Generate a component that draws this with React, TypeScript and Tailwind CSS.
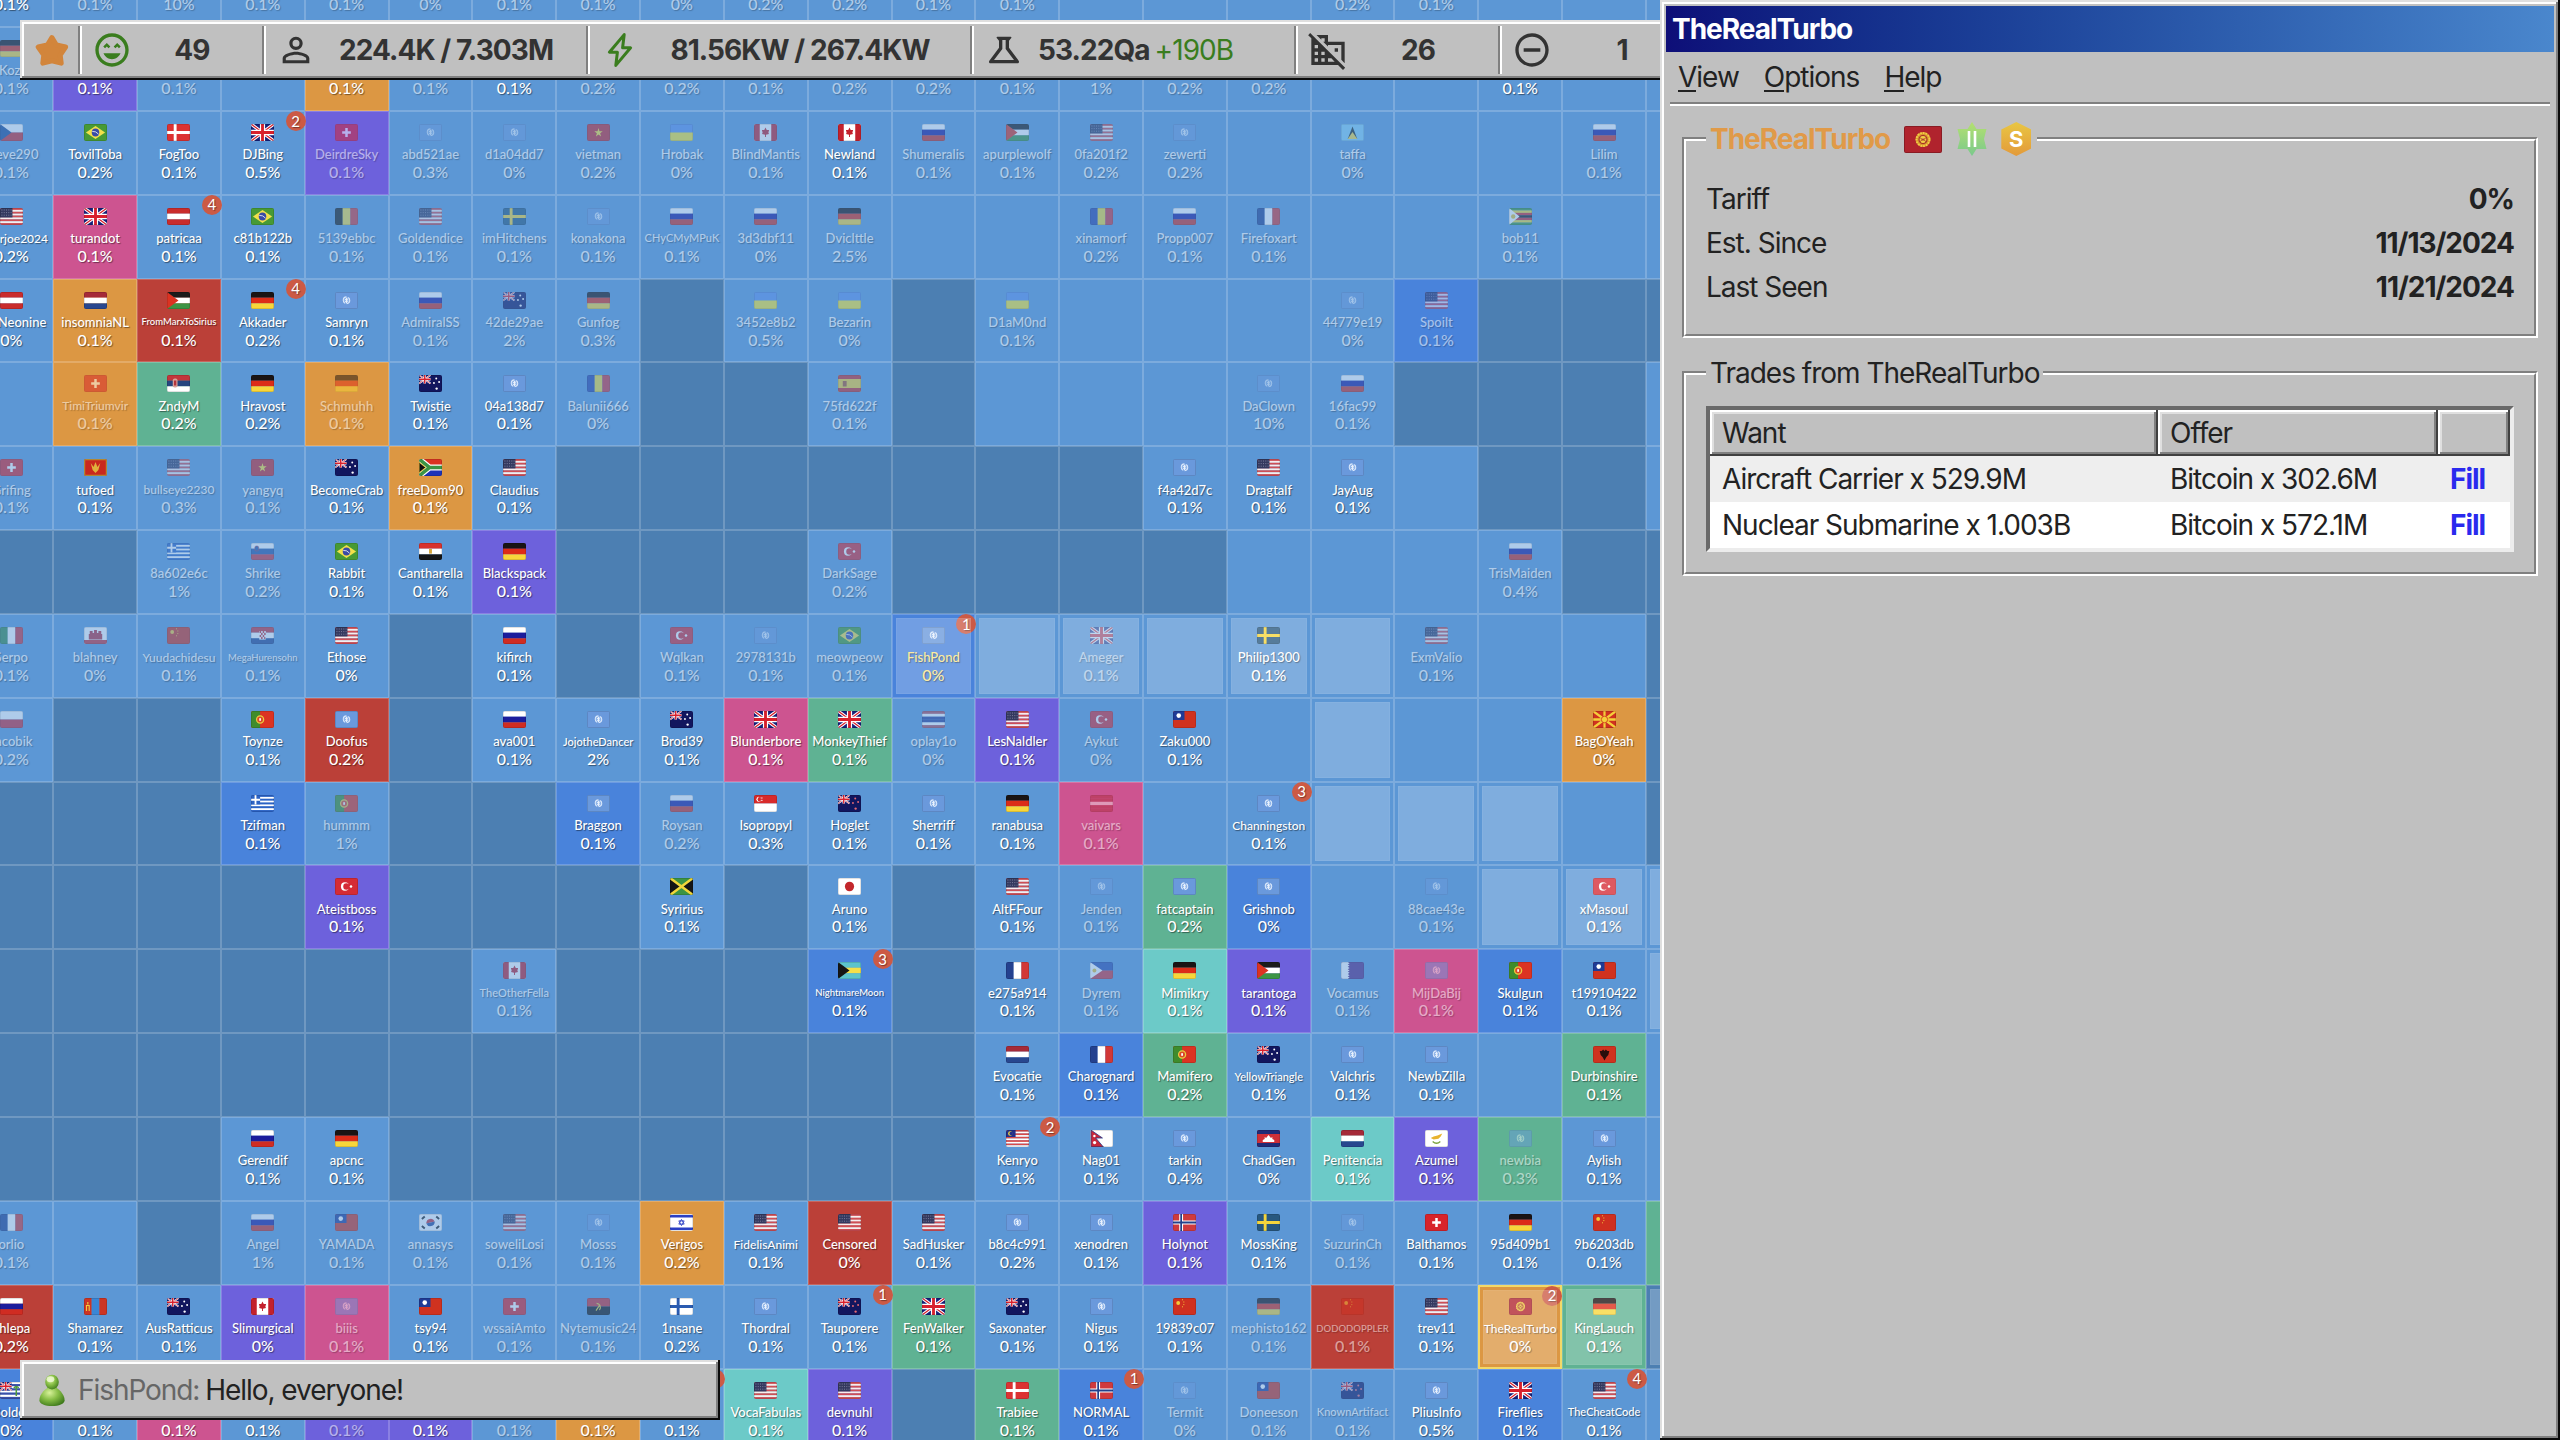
import type { ReactNode } from "react";
import {
  MdOutlineSentimentVerySatisfied,
  MdPersonOutline,
  MdOutlineScience,
  MdDomainDisabled,
  MdRemoveCircleOutline,
} from "react-icons/md";

/* ---------- flags (24 x 17 units) ---------- */

const hs = (...c: string[]) =>
  c.map((f, i) => <rect key={i} x="0" y={(17 / c.length) * i} width="24" height={17 / c.length + 0.1} fill={f} />);
const vs = (...c: string[]) =>
  c.map((f, i) => <rect key={i} y="0" x={(24 / c.length) * i} height="17" width={24 / c.length + 0.1} fill={f} />);
const bg = (f: string) => <rect width="24" height="17" fill={f} />;
const nordic = (base: string, outer: string, inner?: string) => (
  <>
    {bg(base)}
    <path d="M0 8.5H24M8.5 0V17" stroke={outer} strokeWidth={inner ? 4 : 3} />
    {inner && <path d="M0 8.5H24M8.5 0V17" stroke={inner} strokeWidth="1.8" />}
  </>
);
const jack = (
  <>
    {bg("#15207a")}
    <path d="M0 0L24 17M24 0L0 17" stroke="#fff" strokeWidth="3.4" />
    <path d="M0 0L24 17M24 0L0 17" stroke="#d8202c" strokeWidth="1.3" />
    <path d="M12 0V17M0 8.5H24" stroke="#fff" strokeWidth="5.4" />
    <path d="M12 0V17M0 8.5H24" stroke="#d8202c" strokeWidth="3" />
  </>
);
const stripes = (n: number, a: string, b: string) => hs(...Array.from({ length: n }, (_, i) => (i % 2 ? b : a)));
const crescent = (x: number, y: number, r: number, c: string, back: string) => (
  <>
    <circle cx={x} cy={y} r={r} fill={c} />
    <circle cx={x + r * 0.35} cy={y} r={r * 0.78} fill={back} />
    <circle cx={x + r * 1.5} cy={y} r={r * 0.32} fill={c} />
  </>
);
const southern = (star: string) => (
  <>
    {bg("#12165e")}
    <g transform="scale(.5)">{jack}</g>
    <g fill={star}>
      <circle cx="18" cy="3.6" r="1" />
      <circle cx="21" cy="7" r="1" />
      <circle cx="15.6" cy="8" r="1" />
      <circle cx="18.4" cy="13.6" r="1.2" />
    </g>
  </>
);

const FLAGS: Record<string, ReactNode> = {
  un: (
    <>
      {bg("#6a99dc")}
      <circle cx="12" cy="8.3" r="3.4" fill="#8fb4e8" stroke="#dbe9fb" strokeWidth="1.1" strokeDasharray="8.6 2" strokeDashoffset="-7" />
      <path d="M10.5 7.2L13.6 9.6M13.4 6.6L10.8 10M12 6V11" stroke="#eaf2fd" strokeWidth="1" />
    </>
  ),
  br: (
    <>
      {bg("#479a35")}
      <path d="M12 2L22 8.5L12 15L2 8.5Z" fill="#f2e04a" />
      <circle cx="12" cy="8.5" r="3.9" fill="#3a4ba5" />
      <path d="M8.6 7.4Q12.5 7 15.2 10.2" stroke="#fff" strokeWidth="0.8" fill="none" />
    </>
  ),
  dk: nordic("#dc3232", "#fff"),
  se: nordic("#27587f", "#f5d53c"),
  fi: nordic("#fff", "#2a5bb0"),
  no: nordic("#cf3a3e", "#fff", "#24418c"),
  gb: jack,
  ch: (
    <>
      {bg("#d8232a")}
      <path d="M12 4V13M7.5 8.5H16.5" stroke="#fff" strokeWidth="2.6" />
    </>
  ),
  vn: (
    <>
      {bg("#c8262c")}
      <path d="M12 4L13 7.3H16.4L13.7 9.3L14.7 12.6L12 10.6L9.3 12.6L10.3 9.3L7.6 7.3H11Z" fill="#fbe53a" />
    </>
  ),
  ua: hs("#5f93ec", "#f6e838"),
  ca: (
    <>
      {bg("#fff")}
      <path d="M0 0H6V17H0ZM18 0H24V17H18Z" fill="#c3212d" />
      <path d="M12 3.6L13.3 6L15.8 6L15 8.6L15.6 10L12.5 10.7V13H11.5V10.7L8.4 10L9 8.6L8.2 6L10.7 6Z" fill="#c3212d" />
    </>
  ),
  ru: hs("#fff", "#1b1c9c", "#d02c22"),
  ps: (
    <>
      {hs("#1b1b1b", "#fff", "#3c9444")}
      <path d="M0 0L12 8.5L0 17Z" fill="#dc3322" />
    </>
  ),
  us: (
    <>
      {stripes(9, "#cf4f55", "#f5eeee")}
      <rect width="13" height="9.4" fill="#34395f" />
      <path d="M1.5 2H12M1.5 4.6H12M1.5 7.2H12" stroke="#9da0ba" strokeWidth="0.7" strokeDasharray="1 1.4" />
    </>
  ),
  lc: (
    <>
      {bg("#86cff5")}
      <path d="M12 2.5L17 15H7Z" fill="#1d2a2a" />
      <path d="M12 8L17 15H7Z" fill="#f2d94a" />
    </>
  ),
  cz: (
    <>
      {hs("#fff", "#cc2a30")}
      <path d="M0 0L12 8.5L0 17Z" fill="#1d4a94" />
    </>
  ),
  at: hs("#c92c2c", "#fff", "#c92c2c"),
  lv: hs("#b03040", "#b03040", "#f0dde0", "#b03040", "#b03040"),
  th: hs("#b54c5a", "#fff", "#2b3f96", "#2b3f96", "#fff", "#b54c5a"),
  be: vs("#1c1c1c", "#f0dc4b", "#cf3a3e"),
  ro: vs("#2a45a8", "#eddb3e", "#cc3540"),
  fr: vs("#24418f", "#fff", "#d23838"),
  it: vs("#3a8a52", "#fff", "#cc3540"),
  de: hs("#1a1414", "#dc2c18", "#f8d63a"),
  nl: hs("#a52a38", "#fff", "#28478f"),
  pl: hs("#fff", "#c92c3c"),
  sg: (
    <>
      {hs("#d82a2a", "#fff")}
      <circle cx="5" cy="4.3" r="2.5" fill="#fff" />
      <circle cx="6" cy="4.3" r="2.2" fill="#d82a2a" />
      <path d="M7 3H9M7 5.4H9" stroke="#fff" strokeWidth="0.8" />
    </>
  ),
  zw: (
    <>
      {hs("#3c9444", "#f2dc3a", "#cc2a30", "#1b1b1b", "#cc2a30", "#f2dc3a", "#3c9444")}
      <path d="M0 0L11 8.5L0 17Z" fill="#fff" />
      <circle cx="4.4" cy="8.5" r="2.3" fill="#e6c23a" />
    </>
  ),
  au: southern("#fff"),
  nz: southern("#e86a74"),
  es: (
    <>
      {bg("#f4cf35")}
      <path d="M0 2H24M0 15H24" stroke="#c92c2c" strokeWidth="4" />
      <rect x="5" y="6" width="4" height="5.5" fill="#a8562c" />
    </>
  ),
  rs: (
    <>
      {hs("#c2363c", "#26457f", "#fff")}
      <rect x="6" y="3.5" width="5" height="9" rx="2" fill="#d9a19a" />
      <rect x="7.3" y="5.5" width="2.4" height="5" fill="#b3343c" />
    </>
  ),
  me: (
    <>
      {bg("#c9281e")}
      <rect x="0.6" y="0.6" width="22.8" height="15.8" fill="none" stroke="#c99a3a" strokeWidth="1.2" />
      <path d="M7 4L9 11L12 14L15 11L17 4L14 8L12 3L10 8Z" fill="#e0b13c" />
    </>
  ),
  za: (
    <>
      {hs("#dc3322", "#1c33b8")}
      <path d="M0 0L11 8.5L0 17M11 8.5H24" stroke="#fff" strokeWidth="6" fill="none" />
      <path d="M0 0L11 8.5L0 17M10 8.5H24" stroke="#3c9444" strokeWidth="3.6" fill="none" />
      <path d="M0 3L7 8.5L0 14Z" fill="#111" stroke="#f2c83a" strokeWidth="1" />
    </>
  ),
  gr: (
    <>
      {stripes(9, "#2b62c4", "#fff")}
      <rect width="9.5" height="9.4" fill="#2b62c4" />
      <path d="M4.7 0V9.4M0 4.7H9.5" stroke="#fff" strokeWidth="1.9" />
    </>
  ),
  si: (
    <>
      {hs("#fff", "#2a57a5", "#cc3540")}
      <rect x="4" y="3" width="4" height="5" rx="1.5" fill="#2a57a5" stroke="#cc3540" strokeWidth="0.5" />
    </>
  ),
  eg: (
    <>
      {hs("#d8322c", "#fff", "#151515")}
      <rect x="10.5" y="6" width="3" height="4.6" fill="#d6a53a" />
    </>
  ),
  gi: (
    <>
      {bg("#fff")}
      <rect y="13" width="24" height="4" fill="#c8303a" />
      <path d="M5 12.5V7H6V4H9V6H10.5V3H13.5V6H15V4H18V7H19V12.5Z" fill="#b83040" />
    </>
  ),
  cn: (
    <>
      {bg("#cf3020")}
      <circle cx="5.4" cy="5" r="2" fill="#f4c93a" />
      <path d="M9.4 1.8h1M10.8 4h1M10.8 6.6h1M9.4 8.8h1" stroke="#f4c93a" strokeWidth="1" />
    </>
  ),
  hr: (
    <>
      {hs("#c9333c", "#fff", "#28478f")}
      <rect x="8.6" y="4" width="6.8" height="8.6" fill="#fff" />
      <path d="M9 5H15M10.5 7H16M9 9H15M10.5 11H15" stroke="#c9333c" strokeWidth="1.8" strokeDasharray="1.6 1.6" />
    </>
  ),
  tr: (
    <>
      {bg("#d52b35")}
      {crescent(10.4, 8.5, 4.2, "#fff", "#d52b35")}
    </>
  ),
  tw: (
    <>
      {bg("#d0321f")}
      <rect width="12" height="9" fill="#1f3b96" />
      <circle cx="6" cy="4.6" r="2.4" fill="#fff" />
    </>
  ),
  pt: (
    <>
      {bg("#dc3322")}
      <rect width="9.5" height="17" fill="#3f8c2c" />
      <circle cx="9.5" cy="8.5" r="3.7" fill="#dc4a2a" stroke="#e8cf3f" strokeWidth="1.3" />
      <rect x="8.6" y="7.2" width="1.8" height="2.6" fill="#fff" />
    </>
  ),
  mk: (
    <>
      {bg("#d0321f")}
      <path d="M0 0L24 17M24 0L0 17M12 0V17M0 8.5H24" stroke="#f4cf3a" strokeWidth="2.3" />
      <circle cx="12" cy="8.5" r="3.3" fill="#f4cf3a" stroke="#d0321f" strokeWidth="0.8" />
    </>
  ),
  jm: (
    <>
      {bg("#3c9444")}
      <path d="M0 0L12 8.5L0 17ZM24 0L12 8.5L24 17Z" fill="#151515" />
      <path d="M0 0L24 17M24 0L0 17" stroke="#f2d63a" strokeWidth="2.6" />
    </>
  ),
  jp: (
    <>
      {bg("#fff")}
      <circle cx="12" cy="8.5" r="4.8" fill="#c3272b" />
    </>
  ),
  bs: (
    <>
      {hs("#5cc4cc", "#f4df4a", "#5cc4cc")}
      <path d="M0 0L12 8.5L0 17Z" fill="#151515" />
    </>
  ),
  ph: (
    <>
      {hs("#2d4fae", "#cc3540")}
      <path d="M0 0L13 8.5L0 17Z" fill="#fff" />
      <circle cx="4.6" cy="8.5" r="2" fill="#e6c23a" />
    </>
  ),
  qa: (
    <>
      {bg("#5a2c84")}
      <path d="M0 0H7L9 1.2L7 2.4L9 3.6L7 4.8L9 6L7 7.2L9 8.4L7 9.6L9 10.8L7 12L9 13.2L7 14.4L9 15.6L7 17H0Z" fill="#fff" />
    </>
  ),
  al: (
    <>
      {bg("#d0321f")}
      <path d="M7 5L9 5L10.6 3.4L12 5L13.4 3.4L15 5L17 5L16 9L14 11L12 14.6L10 11L8 9Z" fill="#2a0e0c" />
    </>
  ),
  my: (
    <>
      {stripes(10, "#d84a4a", "#fff")}
      <rect width="10" height="7" fill="#24308a" />
      <circle cx="4.4" cy="3.5" r="2.2" fill="#f0d23a" />
      <circle cx="5.3" cy="3.5" r="1.7" fill="#24308a" />
    </>
  ),
  np: (
    <>
      {bg("#fff")}
      <path d="M1 0L13 8H6L14 17H1Z" fill="#c9283a" stroke="#1f3b8c" strokeWidth="0.8" />
      <circle cx="4.6" cy="6" r="1.3" fill="#fff" />
      <circle cx="4.8" cy="12.6" r="1.7" fill="#fff" />
    </>
  ),
  kh: (
    <>
      {bg("#cf2f38")}
      <path d="M0 2H24M0 15H24" stroke="#1f2b78" strokeWidth="4" />
      <path d="M6 12V10L8 9V7L9.5 8L12 5L14.5 8L16 7V9L18 10V12Z" fill="#fff" />
    </>
  ),
  cy: (
    <>
      {bg("#fff")}
      <path d="M6 8L9 6.4L13 5.6L18 3.4L16.4 6.4L14 8.8L9 9.4Z" fill="#e8b32e" />
      <path d="M8 11.4Q12 15 16 11.4" stroke="#7aa23c" strokeWidth="1.4" fill="none" />
    </>
  ),
  il: (
    <>
      {bg("#fff")}
      <path d="M0 2.2H24M0 14.8H24" stroke="#2b3fc4" strokeWidth="2.4" />
      <path d="M12 5.4L14.8 10.1H9.2ZM12 11.6L9.2 6.9H14.8Z" fill="none" stroke="#2b3fc4" strokeWidth="0.9" />
    </>
  ),
  kr: (
    <>
      {bg("#fff")}
      <path d="M7.6 9.5A4.6 4.6 0 0 1 16.4 7.5Z" fill="#c8303a" />
      <path d="M7.6 9.5A4.6 4.6 0 0 0 16.4 7.5Z" fill="#2a4a96" />
      <path d="M3 5L6 2.4M18 2.4L21 5M3 12L6 14.6M18 14.6L21 12" stroke="#222" strokeWidth="2" />
    </>
  ),
  mn: (
    <>
      {vs("#cc3524", "#3a86d6", "#cc3524")}
      <path d="M2.6 13V7.5H5.4V13M4 6.6V4" stroke="#f0cf3a" strokeWidth="1.2" fill="none" />
    </>
  ),
  ao: (
    <>
      {hs("#cc2f34", "#151515")}
      <path d="M9.4 12.6L13.6 6.6M10 5.4A4 4 0 0 1 13 12" stroke="#e0cf3a" strokeWidth="1.2" fill="none" />
    </>
  ),
  kg: (
    <>
      {bg("#b0232d")}
      <circle cx="12" cy="8.5" r="4.7" fill="#d8932f" />
      <circle cx="12" cy="8.5" r="4.1" fill="none" stroke="#f0cf45" strokeWidth="1.2" strokeDasharray="1.1 0.6" />
      <circle cx="12" cy="8.5" r="2.5" fill="#f0cf45" stroke="#a12a28" strokeWidth="0.7" />
      <path d="M10.2 7.4Q12 9.4 13.8 7.4M10.2 9.8Q12 7.6 13.8 9.8" stroke="#a12a28" strokeWidth="0.6" fill="none" />
    </>
  ),
  io: (
    <>
      {stripes(8, "#fff", "#3a4fa8")}
      <g transform="scale(.5)">{jack}</g>
      <path d="M17 5V14M14.5 6Q17 3 19.5 6" stroke="#4f9a3c" strokeWidth="1.6" fill="none" />
    </>
  ),
};

function Flag({ code, className }: { code: string; className: string }) {
  return (
    <svg viewBox="0 0 24 17" preserveAspectRatio="none" className={`overflow-hidden rounded-[2px] ${className}`}>
      {FLAGS[code]}
      <rect x="0.3" y="0.3" width="23.4" height="16.4" rx="1" fill="none" stroke="#000" strokeOpacity=".22" strokeWidth=".7" />
    </svg>
  );
}

/* ---------- world map ---------- */

/*
 * One string per tile, "terrain flag name tariff [options]".
 * Options: i = inactive, h = in reach, s = selected, y = own tile, 1-9 = trade count.
 * A terrain alone is an unclaimed tile; "-" stands for a flag and name that are out of view.
 */
const WORLD: string[] = [
  "L - - 0.1%,L - - 0.1% i,L - - 10% i,L - - 0.1% i,L - - 0.1% i,L - - 0% i,L - - 0.1% i,L - - 0.1% i,L - - 0% i,L - - 0.2% i,L - - 0.2% i,L - - 0.1% i,L - - 0.1% i,L,L,L,L - - 0.2% i,L - - 0.1% i,L,L,L",
  "L de Kozi 0.1% i,P - - 0.1%,L - - 0.1% i,L,O - - 0.1%,L - - 0.1% i,L - - 0.1%,L - - 0.2% i,L - - 0.2% i,L - - 0.1% i,L - - 0.2% i,L - - 0.2% i,L - - 0.1% i,L - - 1% i,L - - 0.2% i,L - - 0.2% i,L,L,L - - 0.1%,L,L",
  "L cz Steve290 0.1% i,L br TovilToba 0.2%,L dk FogToo 0.1%,L gb DJBing 0.5% 2,P ch DeirdreSky 0.1% i,L un abd521ae 0.3% i,L un d1a04dd7 0% i,L vn vietman 0.2% i,L ua Hrobak 0% i,L ca BlindMantis 0.1% i,L ca Newland 0.1%,L ru Shumeralis 0.1% i,L ps apurplewolf 0.1% i,L us 0fa201f2 0.2% i,L un zewerti 0.2% i,L,L lc taffa 0% i,L,L,L ru Lilim 0.1% i,L",
  "L us superjoe2024 0.2%,K gb turandot 0.1%,L at patricaa 0.1% 4,L br c81b122b 0.1%,L be 5139ebbc 0.1% i,L us Goldendice 0.1% i,L se imHitchens 0.1% i,L un konakona 0.1% i,L ru CHyCMyMPuK 0.1% i,L ru 3d3dbf11 0% i,L de Dviclttle 2.5% i,L,L,L ro xinamorf 0.2% i,L ru Propp007 0.1% i,L fr Firefoxart 0.1% i,L,L,L zw bob11 0.1% i,L,L",
  "L at TheNeonine 0%,O nl insomniaNL 0.1%,R ps FromMarxToSirius 0.1%,L de Akkader 0.2% 4,L un Samryn 0.1%,L ru AdmiralSS 0.1% i,L au 42de29ae 2% i,L de Gunfog 0.3% i,D,L ua 3452e8b2 0.5% i,L ua Bezarin 0% i,D,L ua D1aM0nd 0.1% i,L,L,L,L un 44779e19 0% i,B us Spoilt 0.1% i,D,D,D",
  "L,O ch TimiTriumvir 0.1% i,G rs ZndyM 0.2%,L de Hravost 0.2%,O de Schmuhh 0.1% i,L au Twistie 0.1%,L un 04a138d7 0.1%,L ro Balunii666 0% i,D,D,L es 75fd622f 0.1% i,D,L,L,L,L un DaClown 10% i,L ru 16fac99 0.1% i,D,D,D,L",
  "L ch Grifing 0.1% i,L me tufoed 0.1%,L us bullseye2230 0.3% i,L vn yangyq 0.1% i,L au BecomeCrab 0.1%,O za freeDom90 0.1%,L us Claudius 0.1%,D,D,D,D,D,D,D,L un f4a42d7c 0.1%,L us Dragtalf 0.1%,L un JayAug 0.1%,L,D,D,L",
  "D,D,L gr 8a602e6c 1% i,L si Shrike 0.2% i,L br Rabbit 0.1%,L eg Cantharella 0.1%,P de Blackspack 0.1%,D,D,D,L tr DarkSage 0.2% i,D,D,D,D,L,L,L,L ru TrisMaiden 0.4% i,D,D",
  "L it Serpo 0.1% i,L gi blahney 0% i,L cn Yuudachidesu 0.1% i,L hr MegaHurensohn 0.1% i,L us Ethose 0%,D,L ru kifirch 0.1%,D,L tr Wqlkan 0.1% i,L un 2978131b 0.1% i,L br meowpeow 0.1% i,B un FishPond 0% hy1,H,L gb Ameger 0.1% hi,H,L se Philip1300 0.1% h,H,L us ExmValio 0.1% i,L,L,D",
  "L pl Jacobik 0.2% i,D,D,L pt Toynze 0.1%,R un Doofus 0.2%,D,L ru ava001 0.1%,L un JojotheDancer 2%,L au Brod39 0.1%,K gb Blunderbore 0.1%,G gb MonkeyThief 0.1%,L th oplay1o 0% i,P us LesNaldler 0.1%,L tr Aykut 0% i,L tw Zaku000 0.1%,L,H,L,L,O mk BagOYeah 0%,D",
  "D,D,D,B gr Tzifman 0.1%,L pt hummm 1% i,D,D,B un Braggon 0.1%,L ru Roysan 0.2% i,L sg Isopropyl 0.3%,L nz Hoglet 0.1%,L un Sherriff 0.1%,L de ranabusa 0.1%,K lv vaivars 0.1% i,L,L un Channingston 0.1% 3,H,H,H,L,D",
  "D,D,D,D,P tr Ateistboss 0.1%,D,D,D,L jm Syririus 0.1%,D,L jp Aruno 0.1%,D,L us AltFFour 0.1%,L un Jenden 0.1% i,G un fatcaptain 0.2%,B un Grishnob 0%,L,L un 88cae43e 0.1% i,H,L tr xMasoul 0.1% h,H",
  "D,D,D,D,D,D,L ca TheOtherFella 0.1% i,D,D,D,B bs NightmareMoon 0.1% 3,D,L fr e275a914 0.1%,L ph Dyrem 0.1% i,T de Mimikry 0.1%,P ps tarantoga 0.1%,L qa Vocamus 0.1% i,K un MijDaBij 0.1% i,B pt Skulgun 0.1%,L tw t19910422 0.1%,H",
  "D,D,D,D,D,D,D,D,D,D,D,D,L nl Evocatie 0.1%,B fr Charognard 0.1%,G pt Mamifero 0.2%,L au YellowTriangle 0.1%,L un Valchris 0.1%,L un NewbZilla 0.1%,L,G al Durbinshire 0.1%,L",
  "D,D,D,L ru Gerendif 0.1%,L de apcnc 0.1%,D,D,D,D,D,D,D,L my Kenryo 0.1% 2,L np Nag01 0.1%,L un tarkin 0.4%,L kh ChadGen 0%,T nl Penitencia 0.1%,P cy Azumel 0.1%,G un newbia 0.3% i,L un Aylish 0.1%,L",
  "L fr orlio 0.1% i,L,D,L ru Angel 1% i,L tw YAMADA 0.1% i,L kr annasys 0.1% i,L us soweliLosi 0.1% i,L un Mosss 0.1% i,O il Verigos 0.2%,L us FidelisAnimi 0.1%,R us Censored 0%,L us SadHusker 0.1%,L un b8c4c991 0.2%,L un xenodren 0.1%,P no Holynot 0.1%,L se MossKing 0.1%,L un SuzurinCh 0.1% i,L ch Balthamos 0.1%,L de 95d409b1 0.1%,L cn 9b6203db 0.1%,G",
  "R ru Shlepa 0.2%,L mn Shamarez 0.1%,L au AusRatticus 0.1%,P ca Slimurgical 0%,K un biiis 0.1% i,L tw tsy94 0.1%,L ch wssaiAmto 0.1% i,L ao Nytemusic24 0.1% i,L fi 1nsane 0.2%,L un Thordral 0.1%,L nz Tauporere 0.1% 1,G gb FenWalker 0.1%,L au Saxonater 0.1%,L un Nigus 0.1%,L cn 19839c07 0.1%,L de mephisto162 0.1% i,R cn DODODOPPLER 0.1% i,L us trev11 0.1%,O kg TheRealTurbo 0% hs2,G de KingLauch 0.1% h,E",
  "B io Boldor 0%,L - - 0.1%,K - - 0.1%,L - - 0.1%,P - - 0.1% i,P - - 0.1%,L - - 0.1% i,O - - 0.1%,L - - 0.1% 1,T us VocaFabulas 0.1%,P us devnuhl 0.1%,D,G dk Trabiee 0.1%,B no NORMAL 0.1% 1,L un Termit 0% i,L tw Doneeson 0.1% i,L nz KnownArtifact 0.1% i,L un PliusInfo 0.5%,B gb Fireflies 0.1%,L us TheCheatCode 0.1% 4,L",
];

const TERRAIN: Record<string, string> = {
  L: "bg-[#5c97d5]",
  H: "bg-[#5c97d5]",
  D: "bg-[#4c7fb2]",
  E: "bg-[#4c7fb2]",
  B: "bg-[#4983db]",
  P: "bg-[#6d61dc]",
  O: "bg-[#dc9743]",
  K: "bg-[#cd5490]",
  R: "bg-[#bb4038]",
  G: "bg-[#5fb293]",
  T: "bg-[#6ccac8]",
};

const SMALLEST = ["FromMarxToSirius", "MegaHurensohn", "NightmareMoon", "DODODOPPLER"];
const SMALL = ["CHyCMyMPuK", "TheOtherFella", "JojotheDancer", "YellowTriangle", "TheCheatCode", "KnownArtifact"];

function nameSize(name: string) {
  if (SMALLEST.includes(name)) return "text-[9.5px]";
  if (SMALL.includes(name)) return "text-[11px]";
  if (name.length > 11) return "text-[12px]";
  return "text-[13px]";
}

function Tile({ spec }: { spec: string }) {
  const [terrain, flag, name, tariff, opts = ""] = spec.split(" ");
  const inactive = opts.includes("i");
  const reach = terrain === "H" || terrain === "E" || opts.includes("h");
  const count = opts.replace(/\D/g, "");
  return (
    <div
      className={`relative flex flex-col items-center border ${TERRAIN[terrain]} ${
        opts.includes("s") ? "z-10 border-2 border-[#f3d968] pt-[11px]" : "border-white/20 pt-[12px]"
      }`}
    >
      {flag && (
        <div
          className={`flex flex-col items-center whitespace-nowrap [text-shadow:1px_1px_1px_rgba(0,0,0,0.45)] ${
            inactive ? "opacity-50" : ""
          } ${opts.includes("y") ? "text-[#fbe78a]" : "text-white"}`}
        >
          {flag === "-" ? (
            <span className="h-[40px]" />
          ) : (
            <>
              <Flag code={flag} className="h-[17px] w-[23px]" />
              <span className={`mt-[5px] flex h-[18px] items-center font-medium ${nameSize(name)}`}>{name}</span>
            </>
          )}
          <span className="flex h-[16px] items-center text-[16px] font-medium">{tariff}</span>
        </div>
      )}
      {count && (
        <span className="absolute -top-[1px] -right-[2px] z-20 flex size-[20px] items-center justify-center rounded-full bg-[#cc5a45] text-[15px] text-white [text-shadow:1px_1px_1px_rgba(0,0,0,0.4)]">
          {count}
        </span>
      )}
      {reach && <span className="absolute inset-[3px] z-20 border border-white/5 bg-white/22" />}
    </div>
  );
}

/* ---------- bars and panels ---------- */

const RAISED =
  "bg-[#c0c0c0] shadow-[inset_-2px_-2px_#0a0a0a,inset_2px_2px_#dfdfdf,inset_-4px_-4px_#808080,inset_4px_4px_#fff]";

function Stat({ icon, children, className }: { icon: ReactNode; children: ReactNode; className: string }) {
  return (
    <div className={`flex h-[48px] shrink-0 items-center border-l-2 border-[#808080] shadow-[inset_2px_0_#fff] pr-[10px] pl-[12px] ${className}`}>
      <span className="shrink-0 text-[40px]">{icon}</span>
      <span className="flex-1 text-center whitespace-nowrap">{children}</span>
    </div>
  );
}

function TopBar() {
  return (
    <div className={`absolute top-[20px] left-[20px] z-30 flex h-[60px] w-[1700px] items-center pl-[4px] text-[28px] font-bold tracking-[-0.033em] text-[#333] ${RAISED}`}>
      <div className="flex w-[54px] shrink-0 justify-center pl-[2px]">
        <svg viewBox="0 0 34 33" className="h-[33px] w-[34px]">
          <path
            d="M16.9 3.6L21.4 11L30.6 13L25.2 21L26.2 29.2L17 26.8L7.8 29.2L8.8 21L3.2 13L12.4 11Z"
            fill="#d2853b"
            stroke="#d2853b"
            strokeWidth="5"
            strokeLinejoin="round"
          />
        </svg>
      </div>
      <Stat icon={<MdOutlineSentimentVerySatisfied className="text-[#3a7d1e]" />} className="w-[184px]">
        49
      </Stat>
      <Stat icon={<MdPersonOutline />} className="w-[324px]">
        224.4K / 7.303M
      </Stat>
      <Stat
        icon={
          <svg viewBox="0 0 40 40" className="size-[40px]">
            <path d="M24.2 4.6L9.4 22.2H17.4L15.8 35.4L30.6 17.8H22.6Z" fill="none" stroke="#3a7d1e" strokeWidth="3" strokeLinejoin="round" />
          </svg>
        }
        className="w-[384px]"
      >
        81.56KW / 267.4KW
      </Stat>
      <Stat icon={<MdOutlineScience />} className="w-[324px]">
        <span className="flex gap-[5px] pl-[14px]">
          53.22Qa<span className="font-normal text-[#3a7d1e]">+190B</span>
        </span>
      </Stat>
      <Stat icon={<MdDomainDisabled />} className="w-[204px]">
        26
      </Stat>
      <Stat icon={<MdRemoveCircleOutline />} className="w-[204px]">
        1
      </Stat>
    </div>
  );
}

function ChatBar() {
  return (
    <div className={`absolute top-[1360px] left-[20px] z-30 flex h-[60px] w-[700px] items-center pl-[18px] text-[28px] tracking-[-0.038em] text-[#222] ${RAISED}`}>
      <svg viewBox="0 0 28 34" className="h-[33px] w-[28px]">
        <defs>
          <radialGradient id="body" cx="40%" cy="35%" r="70%">
            <stop offset="0" stopColor="#d8f29a" />
            <stop offset=".5" stopColor="#86bd45" />
            <stop offset="1" stopColor="#3f7a1c" />
          </radialGradient>
        </defs>
        <path d="M14 12C7 14 1 21 1 27C1 31 7 33 14 33S27 31 27 27C27 21 21 14 14 12Z" fill="url(#body)" />
        <ellipse cx="14" cy="8.3" rx="7" ry="7.6" fill="url(#body)" />
        <ellipse cx="12.4" cy="5.4" rx="4" ry="3" fill="#f2fbdc" opacity=".8" />
      </svg>
      <span className="ml-[12px] text-[#666]">FishPond:</span>
      <span className="ml-[6px]">Hello, everyone!</span>
    </div>
  );
}

function GroupBox({ legend, className, children }: { legend: ReactNode; className: string; children: ReactNode }) {
  return (
    <section className={`border-2 border-t-[#808080] border-r-white border-b-white border-l-[#808080] ${className}`}>
      <div className="flex h-full flex-col border-2 border-t-white border-r-[#808080] border-b-[#808080] border-l-white px-[20px]">
        <header className="-mt-[21px] flex h-[38px] items-center self-start bg-[#c0c0c0] px-[4px]">{legend}</header>
        {children}
      </div>
    </section>
  );
}

function Row({ label, value }: { label: string; value: string }) {
  return (
    <div className="flex h-[44px] items-center justify-between">
      <span>{label}</span>
      <span className="font-bold">{value}</span>
    </div>
  );
}

const TRADES = [
  ["Aircraft Carrier x 529.9M", "Bitcoin x 302.6M"],
  ["Nuclear Submarine x 1.003B", "Bitcoin x 572.1M"],
];

const COLS = "grid grid-cols-[448px_280px_72px]";
const HEAD =
  "flex items-center pl-[12px] bg-[#c0c0c0] shadow-[inset_-2px_-2px_#404040,inset_2px_2px_#fff,inset_-4px_-4px_#808080,inset_4px_4px_#dfdfdf]";

function Panel() {
  return (
    <aside className={`z-40 h-[1440px] w-[900px] shrink-0 p-[6px] text-[28px] tracking-[-0.036em] text-[#222] ${RAISED}`}>
      <h1 className="flex h-[46px] items-center bg-linear-to-r from-[#0e0e78] to-[#4a87cd] pl-[6px] text-[28px] font-bold text-white">
        TheRealTurbo
      </h1>
      <nav className="mx-[4px] flex h-[52px] items-center gap-[25px] border-b-2 border-[#808080] pl-[8px] shadow-[0_2px_#fff]">
        {["View", "Options", "Help"].map((m) => (
          <span key={m}>
            <span className="inline-block h-[29px] border-b-2 border-[#222] leading-none">{m[0]}</span>
            {m.slice(1)}
          </span>
        ))}
      </nav>
      <GroupBox
        className="mx-[16px] mt-[33px] h-[201px]"
        legend={
          <>
            <span className="font-bold text-[#e09a48]">TheRealTurbo</span>
            <Flag code="kg" className="ml-[14px] h-[27px] w-[38px]" />
            <svg viewBox="0 0 30 34" className="ml-[15px] h-[34px] w-[30px]">
              <defs>
                <linearGradient id="g1" x2="0" y2="1">
                  <stop stopColor="#b4e070" />
                  <stop offset="1" stopColor="#7ac98c" />
                </linearGradient>
              </defs>
              <path d="M15 0L19.5 7L29.5 7L27 17L29.5 27L19.5 27L15 34L10.5 27L.5 27L3 17L.5 7L10.5 7Z" fill="url(#g1)" />
              <path d="M12 9V25M18 9V25" stroke="#fff" strokeWidth="2.6" />
            </svg>
            <span className="ml-[14px] flex h-[34px] w-[30px] items-center justify-center bg-linear-to-b from-[#e8c643] to-[#e39a3a] text-[22px] font-bold tracking-normal text-white [clip-path:polygon(50%_0,100%_22%,100%_78%,50%_100%,0_78%,0_22%)]">
              S
            </span>
            <span className="w-[2px]" />
          </>
        }
      >
        <div className="pt-[19px]">
          <Row label="Tariff" value="0%" />
          <Row label="Est. Since" value="11/13/2024" />
          <Row label="Last Seen" value="11/21/2024" />
        </div>
      </GroupBox>
      <GroupBox className="mx-[16px] mt-[33px] h-[205px]" legend={<span>Trades from TheRealTurbo</span>}>
        <div className="mt-[14px] border-4 border-t-[#696969] border-r-[#ececec] border-b-[#ececec] border-l-[#696969] bg-white">
          <div className={`${COLS} h-[46px]`}>
            <div className={HEAD}>Want</div>
            <div className={HEAD}>Offer</div>
            <div className={HEAD} />
          </div>
          {TRADES.map(([want, offer]) => (
            <div key={want} className={`${COLS} h-[46px] items-center odd:bg-white even:bg-[#eee]`}>
              <span className="pl-[12px]">{want}</span>
              <span className="pl-[12px]">{offer}</span>
              <span className="pl-[12px] font-bold text-[#2a2aee]">Fill</span>
            </div>
          ))}
        </div>
      </GroupBox>
    </aside>
  );
}

export default function App() {
  return (
    <div className="flex h-[1440px] w-[2560px] overflow-hidden bg-[#4c7fb2] [font-family:Inter,sans-serif]">
      <main className="relative h-[1440px] w-[1660px] shrink-0 overflow-hidden">
        <div className="-mt-[56.8px] -ml-[30.6px] grid w-max grid-cols-[repeat(21,83.83px)] auto-rows-[83.85px] [font-family:Lato,sans-serif]">
          {WORLD.flatMap((row, r) => row.split(",").map((spec, c) => <Tile key={`${r}-${c}`} spec={spec} />))}
        </div>
        <TopBar />
        <ChatBar />
      </main>
      <Panel />
    </div>
  );
}
